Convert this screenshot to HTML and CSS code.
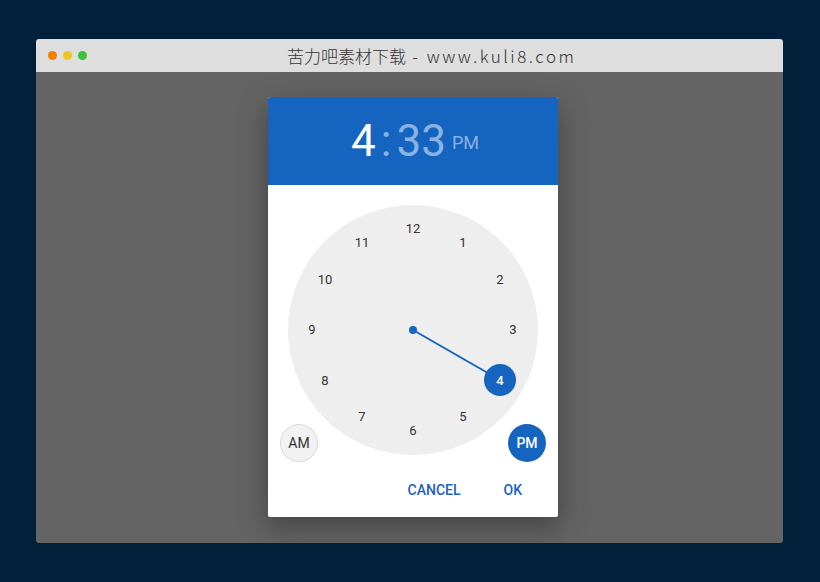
FILE: index.html
```html
<html>
  <head>
    <title>Time picker</title>
    <meta name="viewport" content="width=device-width, initial-scale=1">
    <link rel="stylesheet" href="styles.css">
  </head>
  <body>
    <div class="window">
      <div class="titlebar">
        <span class="dot orange"></span>
        <span class="dot yellow"></span>
        <span class="dot green"></span>
        <span class="title">苦力吧素材下载<span class="latin"> - www.kuli8.com</span></span>
      </div>
      <div class="stage">
        <div class="dialog">
          <div class="header">
            <span class="hour">4</span><span class="sep">:</span><span class="minute">33</span><span class="ampm">PM</span>
          </div>
          <div class="body">
            <div class="face">
              <svg class="hand" width="250" height="250" viewBox="0 0 250 250">
                <line x1="125" y1="125" x2="212" y2="175" stroke="#1565c0" stroke-width="2" />
                <circle cx="125" cy="125" r="4" fill="#1565c0" />
                <circle cx="212" cy="175" r="16" fill="#1565c0" />
              </svg>
              <span class="num" style="left: 125px; top: 23px">12</span>
              <span class="num" style="left: 175px; top: 37px">1</span>
              <span class="num" style="left: 212px; top: 74px">2</span>
              <span class="num" style="left: 225px; top: 124px">3</span>
              <span class="num active" style="left: 212px; top: 175px">4</span>
              <span class="num" style="left: 175px; top: 211px">5</span>
              <span class="num" style="left: 125px; top: 225px">6</span>
              <span class="num" style="left: 74px; top: 211px">7</span>
              <span class="num" style="left: 37px; top: 175px">8</span>
              <span class="num" style="left: 24px; top: 124px">9</span>
              <span class="num" style="left: 37px; top: 74px">10</span>
              <span class="num" style="left: 74px; top: 37px">11</span>
            </div>
            <span class="period am">AM</span>
            <span class="period pm">PM</span>
          </div>
          <div class="actions">
            <span class="btn">CANCEL</span>
            <span class="btn">OK</span>
          </div>
        </div>
      </div>
    </div>
  </body>
</html>
```

FILE: styles.css
```css
html, body {
  height: 100%;
}

body {
  background: #03203a;
  font-family: Roboto, sans-serif;
  margin: 0;
  padding: 39px 37px 39px 36px;
  box-sizing: border-box;
}

.window {
  border-radius: 3px;
  display: flex;
  flex-direction: column;
  height: 504px;
  overflow: hidden;
  width: 747px;
}

.titlebar {
  align-items: center;
  background: #dedede;
  display: flex;
  height: 33px;
  padding-left: 12px;
  position: relative;
}

.dot {
  border-radius: 50%;
  height: 9px;
  margin-right: 6px;
  width: 9px;
}

.orange { background: #f77f00; }
.yellow { background: #f0c51c; }
.green { background: #3ac23a; }

.title {
  color: #333333;
  font-family: "Noto Sans CJK SC", "DejaVu Sans", sans-serif;
  font-size: 17px;
  font-weight: 300;
  left: 251px;
  position: absolute;
  top: 4px;
}

.latin {
  letter-spacing: 2.5px;
}

.stage {
  background: #646464;
  display: flex;
  flex: 1;
  justify-content: center;
  padding-top: 25px;
}

.dialog {
  background: #ffffff;
  border-radius: 2px;
  box-shadow: 0 10px 30px rgba(0, 0, 0, 0.35);
  height: 420px;
  margin-left: 7px;
  overflow: hidden;
  width: 290px;
}

.header {
  align-items: baseline;
  background: #1565c0;
  box-sizing: border-box;
  display: flex;
  height: 88px;
  justify-content: center;
  padding-left: 4px;
  padding-top: 18px;
}

.hour {
  color: #ffffff;
  font-size: 44px;
}

.sep {
  color: #8ab2e2;
  font-size: 44px;
  margin: 0 5px;
}

.minute {
  color: #8ab2e2;
  font-size: 44px;
}

.ampm {
  color: #8ab2e2;
  font-size: 18px;
  margin-left: 6px;
  position: relative;
  top: -7px;
}

.body {
  height: 285px;
  padding-top: 20px;
  position: relative;
  box-sizing: border-box;
}

.face {
  background: #eeeeee;
  border-radius: 50%;
  height: 250px;
  margin: 0 auto;
  position: relative;
  width: 250px;
}

.hand {
  left: 0;
  position: absolute;
  top: 0;
}

.num {
  color: #333333;
  font-size: 13px;
  position: absolute;
  transform: translate(-50%, -50%);
}

.num.active {
  color: #ffffff;
  font-weight: 500;
}

.period {
  align-items: center;
  border-radius: 50%;
  box-sizing: border-box;
  display: flex;
  font-size: 14px;
  height: 38px;
  justify-content: center;
  position: absolute;
  top: 239px;
  width: 38px;
}

.am {
  background: #f2f2f2;
  border: 1px solid #d8d8d8;
  color: #333333;
  left: 12px;
}

.pm {
  background: #1565c0;
  color: #ffffff;
  font-weight: 500;
  right: 12px;
}

.actions {
  display: flex;
  gap: 43px;
  justify-content: flex-end;
  padding-right: 36px;
  padding-top: 12px;
}

.btn {
  color: #1e5fbf;
  font-size: 14px;
  font-weight: 500;
}
```
